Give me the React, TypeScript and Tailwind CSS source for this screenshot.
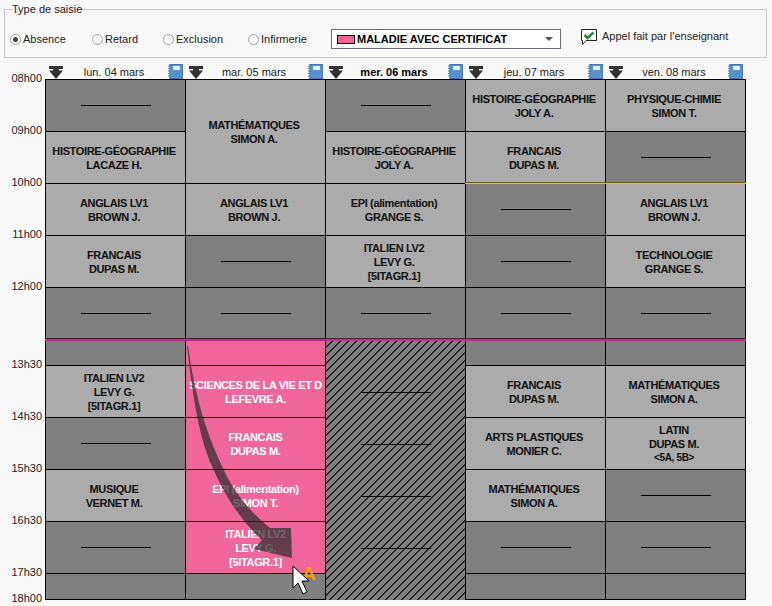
import React from "react";

const font = "font-['Liberation_Sans',Arial,sans-serif]";

type C =
  | { k: "text"; lines: string[]; span?: number; pink?: boolean }
  | { k: "dash" }
  | { k: "dark" }
  | { k: "pink" }
  | { k: "hatch" };

const t = (s: string, span?: number): C => ({ k: "text", lines: s.split("|"), span });
const p = (s: string): C => ({ k: "text", lines: s.split("|"), pink: true });
const dash: C = { k: "dash" };
const dark: C = { k: "dark" };

const columns: C[][] = [
  [dash, t("HISTOIRE-GÉOGRAPHIE|LACAZE H."), t("ANGLAIS LV1|BROWN J."), t("FRANCAIS|DUPAS M."), dash, dark, t("ITALIEN LV2|LEVY G.|[5ITAGR.1]"), dash, t("MUSIQUE|VERNET M."), dash, dark],
  [t("MATHÉMATIQUES|SIMON A.", 2), t("ANGLAIS LV1|BROWN J."), dash, dash, { k: "pink" }, p("SCIENCES DE LA VIE ET D|LEFEVRE A."), p("FRANCAIS|DUPAS M."), p("EPI (alimentation)|SIMON T."), p("ITALIEN LV2|LEVY G.|[5ITAGR.1]"), dark],
  [dash, t("HISTOIRE-GÉOGRAPHIE|JOLY A."), t("EPI (alimentation)|GRANGE S."), t("ITALIEN LV2|LEVY G.|[5ITAGR.1]"), dash, { k: "hatch" }],
  [t("HISTOIRE-GÉOGRAPHIE|JOLY A."), t("FRANCAIS|DUPAS M."), dash, dash, dash, dark, t("FRANCAIS|DUPAS M."), t("ARTS PLASTIQUES|MONIER C."), t("MATHÉMATIQUES|SIMON A."), dash, dark],
  [t("PHYSIQUE-CHIMIE|SIMON T."), dash, t("ANGLAIS LV1|BROWN J."), t("TECHNOLOGIE|GRANGE S."), dash, dark, t("MATHÉMATIQUES|SIMON A."), t("LATIN|DUPAS M.|<5A, 5B>"), dash, dash, dark],
];

const days = ["lun. 04 mars", "mar. 05 mars", "mer. 06 mars", "jeu. 07 mars", "ven. 08 mars"];
const hours: [string, string][] = [
  ["08h00", "h-[52px]"], ["09h00", "h-[52px]"], ["10h00", "h-[52px]"], ["11h00", "h-[52px]"], ["12h00", "h-[78px]"],
  ["13h30", "h-[52px]"], ["14h30", "h-[52px]"], ["15h30", "h-[52px]"], ["16h30", "h-[52px]"], ["17h30", "h-[26px]"], ["18h00", "h-[1px]"],
];

const Dash = () => <div className="w-[70px] h-px bg-black" />;

function Cell({ c }: { c: C }) {
  const base = "border-r border-b border-black flex items-center justify-center overflow-hidden min-h-0";
  if (c.k === "dash") return <div className={`${base} bg-[#808080]`}><Dash /></div>;
  if (c.k === "dark") return <div className={`${base} bg-[#808080]`} />;
  if (c.k === "pink") return <div className={`${base} bg-[#f0669b]`} />;
  if (c.k === "hatch")
    return (
      <div className="row-span-6 border-r border-black bg-[repeating-linear-gradient(135deg,#808080_0,#808080_4.9px,#262626_4.9px,#262626_5.657px)] grid grid-rows-[26px_repeat(4,52px)_26px]">
        <div />
        {[0, 1, 2, 3].map((i) => (
          <div key={i} className="flex items-center justify-center"><Dash /></div>
        ))}
        <div />
      </div>
    );
  return (
    <div
      className={`${base} ${c.span === 2 ? "row-span-2" : ""} ${c.pink ? "bg-[#f0669b] text-white" : "bg-[#ababab] text-[#111] pr-[3px]"} flex-col font-bold text-[11px] tracking-[-0.35px] leading-[14px] text-center whitespace-nowrap`}
    >
      {c.lines.map((l) => (
        <span key={l} className={l.startsWith("<") ? "text-[10px]" : ""}>{l}</span>
      ))}
    </div>
  );
}

const Radio = ({ label, on, w }: { label: string; on?: boolean; w: string }) => (
  <div className={`${w} flex items-center gap-[2px] shrink-0`}>
    <span className="w-[11px] h-[11px] rounded-full border border-[#a0a0a0] bg-white flex items-center justify-center">
      {on && <span className="w-[5px] h-[5px] rounded-full bg-[#444]" />}
    </span>
    <span className="text-[11px] leading-[14px] text-[#222]">{label}</span>
  </div>
);

const PinIcon = () => (
  <svg width="14" height="13" viewBox="0 0 14 13" className="shrink-0">
    <path d="M0 0H14V3H10V4.5H14L7 13L0 4.5H4V3H0Z" fill="#333" />
  </svg>
);

const BookIcon = () => (
  <svg width="15" height="15" viewBox="0 0 15 15" className="shrink-0">
    <rect x="1.5" y="0" width="13.5" height="15" fill="#5590cf" />
    <rect x="1.8" y="0.3" width="12.9" height="14.4" fill="none" stroke="#3a6da8" strokeWidth="0.6" />
    <rect x="5" y="2" width="7" height="4" fill="#e6eefa" />
    <path d="M0 2H2M0 4.5H2M0 7H2M0 9.5H2M0 12H2" stroke="#777" strokeWidth="1" />
  </svg>
);

const CheckIcon = () => (
  <svg width="17" height="17" viewBox="0 0 17 17" className="shrink-0">
    <path d="M0.5 0.5H15.5V11.5H5L1.5 15.5V11.5H0.5Z" fill="#fff" stroke="#222" strokeWidth="1" />
    <path d="M3.5 6L6.5 9L12.5 3.5" fill="none" stroke="#2f8a4a" strokeWidth="2.6" />
  </svg>
);

export default function App() {
  return (
    <div className={`relative w-[772px] h-[606px] bg-[#f9f9f9] overflow-hidden text-black ${font}`}>
      <fieldset className="ml-[4px] mt-[2px] w-[763px] h-[56px] border border-[#c8c8c8] p-0 m-0">
        <legend className="ml-[7px] p-0 text-[11px] leading-[14px] text-[#222]">Type de saisie</legend>
        <div className="flex items-center pl-[5px] pt-[13px]">
          <Radio label="Absence" on w="w-[82px]" />
          <Radio label="Retard" w="w-[71px]" />
          <Radio label="Exclusion" w="w-[85px]" />
          <Radio label="Infirmerie" w="w-[83px]" />
          <div className="w-[230px] h-[20px] border border-[#6a6a78] bg-white flex items-center pl-[5px] pr-[7px] shrink-0">
            <span className="w-[18px] h-[9px] bg-[#f0669b] border border-black shrink-0" />
            <span className="ml-[2px] text-[11px] font-bold flex-1 whitespace-nowrap">MALADIE AVEC CERTIFICAT</span>
            <span className="w-0 h-0 border-l-[4px] border-r-[4px] border-t-[4px] border-l-transparent border-r-transparent border-t-[#555]" />
          </div>
          <div className="ml-[20px] flex items-center gap-[4px] -mt-[4px]">
            <CheckIcon />
            <span className="text-[11px] leading-[14px] text-[#222] whitespace-nowrap -mt-[3px]">Appel fait par l'enseignant</span>
          </div>
        </div>
      </fieldset>

      <div className="flex pl-[46px] mt-[6px] h-[15px] items-end">
        {days.map((d, i) => (
          <div key={d} className="w-[140px] flex items-end px-[3px] shrink-0">
            <PinIcon />
            <span className={`flex-1 text-center pr-[3px] text-[11px] leading-[14px] ${i === 2 ? "font-bold" : "text-[#222]"}`}>{d}</span>
            <BookIcon />
          </div>
        ))}
      </div>

      <div className="flex">
        <div className="w-[45px] shrink-0 flex flex-col">
          {hours.map(([h, cls]) => (
            <div key={h} className={`${cls} pr-[3px] text-right text-[11px] leading-[14px] text-[#222]`}>
              <span className="block -mt-[8px]">{h}</span>
            </div>
          ))}
        </div>
        <div className="grid grid-flow-col grid-cols-[repeat(5,140px)] grid-rows-[repeat(5,52px)_26px_repeat(4,52px)_26px] border-l border-t border-black">
          {columns.flatMap((col, i) => col.map((c, j) => <Cell key={`${i}-${j}`} c={c} />))}
        </div>
      </div>

      {/* ligne de midi et ligne de l'heure */}
      <div className="absolute left-[45px] top-[338px] w-[701px] h-[3px] bg-[#c0288c] border-t border-t-[#40202f]" />
      <div className="absolute left-[465px] top-[182px] w-[281px] h-[2px] bg-[#f5c400] border-t border-t-[#6a5a10]" />

      {/* flèche et curseur */}
      <span className="absolute left-[302px] top-[563px] text-[19px] leading-[22px] font-bold text-[#ff9a00]">A</span>
      <svg className="absolute left-0 top-0 pointer-events-none" width="772" height="606" viewBox="0 0 772 606">
        <path
          d="M188 346C195 395 205 430 222 466C232 490 250 512 270 528L291 528L292 558L254 549L262 540C238 518 222 490 212 466C200 440 193 400 187 346Z"
          fill="#2e2e2e"
          opacity="0.72"
        />
        <path d="M293 566V588L298 583L303 594L307 592L302 581L309 581Z" fill="#fff" stroke="#000" strokeWidth="1" />
      </svg>
    </div>
  );
}
